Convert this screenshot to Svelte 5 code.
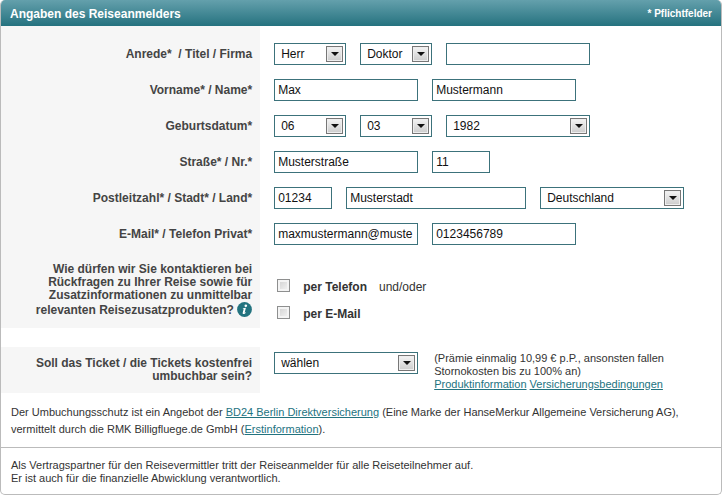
<script lang="ts">
  let anrede = $state('Herr');
  let titel = $state('Doktor');
  let firma = $state('');
  let vorname = $state('Max');
  let nachname = $state('Mustermann');
  let tag = $state('06');
  let monat = $state('03');
  let jahr = $state('1982');
  let strasse = $state('Musterstraße');
  let hausnummer = $state('11');
  let plz = $state('01234');
  let stadt = $state('Musterstadt');
  let land = $state('Deutschland');
  let email = $state('maxmustermann@muste');
  let telefon = $state('0123456789');
  let perTelefon = $state(false);
  let perMail = $state(false);
  let umbuchbar = $state('wählen');

  const range = (from: number, to: number) =>
    Array.from({ length: to - from + 1 }, (_, i) => String(from + i).padStart(2, '0'));

  const tage = range(1, 31);
  const monate = range(1, 12);
  const jahre = range(1920, 2012).reverse();
</script>

{#snippet arrow()}
  <span class="arrow" aria-hidden="true">
    <svg width="8" height="4" viewBox="0 0 8 4"><path d="M0 0h8L4 4z" fill="#111" /></svg>
  </span>
{/snippet}

<form class="box" onsubmit={(e) => e.preventDefault()}>
  <header>
    <h2>Angaben des Reiseanmelders</h2>
    <span class="required">* Pflichtfelder</span>
  </header>

  <div class="rows">
    <div class="row">
      <div class="label">
        <label for="anrede">Anrede*</label>&nbsp; / <label for="titel">Titel</label> /
        <label for="firma">Firma</label>
      </div>
      <div class="fields">
        <span class="select s">
          <select id="anrede" bind:value={anrede}>
            <option>Herr</option>
            <option>Frau</option>
          </select>
          {@render arrow()}
        </span>
        <span class="select s">
          <select id="titel" bind:value={titel}>
            <option>Doktor</option>
            <option>Prof.</option>
          </select>
          {@render arrow()}
        </span>
        <input class="m" id="firma" type="text" bind:value={firma} />
      </div>
    </div>

    <div class="row">
      <div class="label">
        <label for="vorname">Vorname*</label> / <label for="nachname">Name*</label>
      </div>
      <div class="fields">
        <input class="m" id="vorname" type="text" bind:value={vorname} />
        <input class="m" id="nachname" type="text" bind:value={nachname} />
      </div>
    </div>

    <div class="row">
      <div class="label"><label for="tag">Geburtsdatum*</label></div>
      <div class="fields">
        <span class="select s">
          <select id="tag" bind:value={tag}>
            {#each tage as t}<option>{t}</option>{/each}
          </select>
          {@render arrow()}
        </span>
        <span class="select s">
          <select id="monat" aria-label="Monat" bind:value={monat}>
            {#each monate as m}<option>{m}</option>{/each}
          </select>
          {@render arrow()}
        </span>
        <span class="select m">
          <select id="jahr" aria-label="Jahr" bind:value={jahr}>
            {#each jahre as j}<option>{j}</option>{/each}
          </select>
          {@render arrow()}
        </span>
      </div>
    </div>

    <div class="row">
      <div class="label">
        <label for="strasse">Straße*</label> / <label for="hausnummer">Nr.*</label>
      </div>
      <div class="fields">
        <input class="m" id="strasse" type="text" bind:value={strasse} />
        <input class="xs" id="hausnummer" type="text" bind:value={hausnummer} />
      </div>
    </div>

    <div class="row">
      <div class="label">
        <label for="plz">Postleitzahl*</label> / <label for="stadt">Stadt*</label> /
        <label for="land">Land*</label>
      </div>
      <div class="fields">
        <input class="xs" id="plz" type="text" bind:value={plz} />
        <input class="l" id="stadt" type="text" bind:value={stadt} />
        <span class="select m">
          <select id="land" bind:value={land}>
            <option>Deutschland</option>
            <option>Österreich</option>
            <option>Schweiz</option>
          </select>
          {@render arrow()}
        </span>
      </div>
    </div>

    <div class="row">
      <div class="label">
        <label for="email">E-Mail*</label> / <label for="telefon">Telefon Privat*</label>
      </div>
      <div class="fields">
        <input class="m" id="email" type="text" bind:value={email} />
        <input class="m" id="telefon" type="text" bind:value={telefon} />
      </div>
    </div>

    <div class="row contact" role="group" aria-labelledby="kontakt">
      <div class="label" id="kontakt">
        Wie dürfen wir Sie kontaktieren bei<br />
        Rückfragen zu Ihrer Reise sowie für<br />
        Zusatzinformationen zu unmittelbar<br />
        relevanten Reisezusatzprodukten?
        <svg class="info" width="15" height="15" viewBox="0 0 15 15" aria-hidden="true">
          <circle cx="7.5" cy="7.5" r="7.4" fill="#23737f" />
          <circle cx="8.8" cy="3.7" r="1.3" fill="#fff" />
          <path
            d="M5.9 6.2 8.9 5.8 7.7 10.4c-.1.5.2.5.9-.1l.3.4c-1.4 1.8-3.6 1.9-3.2.1l.9-3.6c.1-.4-.1-.5-.8-.5z"
            fill="#fff"
          />
        </svg>
      </div>
      <div class="checks">
        <div class="check">
          <input id="per-telefon" type="checkbox" bind:checked={perTelefon} />
          <label for="per-telefon">per Telefon</label>
          <span>und/oder</span>
        </div>
        <div class="check">
          <input id="per-mail" type="checkbox" bind:checked={perMail} />
          <label for="per-mail">per E-Mail</label>
        </div>
      </div>
    </div>
  </div>

  <div class="row ticket">
    <div class="label">
      <label for="umbuchbar">Soll das Ticket / die Tickets kostenfrei<br />umbuchbar sein?</label>
    </div>
    <div class="fields">
      <span class="select m">
        <select id="umbuchbar" bind:value={umbuchbar}>
          <option>wählen</option>
          <option>ja</option>
          <option>nein</option>
        </select>
        {@render arrow()}
      </span>
      <p class="premium">
        (Prämie einmalig 10,99 € p.P., ansonsten fallen<br />
        Stornokosten bis zu 100% an)<br />
        <a href="#produktinformation">Produktinformation</a>
        <a href="#versicherungsbedingungen">Versicherungsbedingungen</a>
      </p>
    </div>
  </div>

  <p class="offer">
    Der Umbuchungsschutz ist ein Angebot der <a href="#bd24">BD24 Berlin Direktversicherung</a> (Eine
    Marke der HanseMerkur Allgemeine Versicherung AG),<br />
    vermittelt durch die RMK Billigfluege.de GmbH (<a href="#erstinformation">Erstinformation</a>).
  </p>

  <p class="partner">
    Als Vertragspartner für den Reisevermittler tritt der Reiseanmelder für alle Reiseteilnehmer
    auf.<br />
    Er ist auch für die finanzielle Abwicklung verantwortlich.
  </p>
</form>

<style>
  .box {
    box-sizing: border-box;
    border: 1px solid #bbb;
    border-top: 0;
    border-radius: 5px;
    overflow: hidden;
    background: #fff;
    color: #333;
    font: 11px/13px 'Liberation Sans', Arial, sans-serif;
  }
  header {
    display: flex;
    align-items: center;
    justify-content: space-between;
    height: 26px;
    margin: 0 -1px;
    padding: 0 10px;
    background: linear-gradient(#64a0ac, #25727f);
    color: #fff;
  }
  h2 {
    margin: 0;
    padding-top: 2px;
    font-size: 12px;
    line-height: 14px;
  }
  .required {
    font-size: 10px;
    font-weight: bold;
  }
  .rows {
    padding-top: 10px;
    background: linear-gradient(#f6f6f6, #f6f6f6) 0 0 / 36% 100% no-repeat;
  }
  .row {
    display: grid;
    grid-template-columns: 36% 1fr;
    align-items: center;
    min-height: 36px;
  }
  .label {
    padding-right: 8px;
    color: #444;
    font-size: 12px;
    font-weight: bold;
    line-height: 13px;
    text-align: right;
  }
  .fields {
    display: flex;
    align-items: center;
    gap: 14px;
    padding-left: 14px;
  }
  input[type='text'],
  select {
    box-sizing: border-box;
    height: 22px;
    margin: 0;
    padding: 0 0 0 3px;
    border: 1px solid #3c727b;
    border-radius: 0;
    background: #fff;
    color: #111;
    font: 12px 'Liberation Sans', Arial, sans-serif;
  }
  select {
    width: 100%;
    padding: 0 22px 0 6px;
    appearance: none;
  }
  .select {
    position: relative;
    display: block;
  }
  .arrow {
    position: absolute;
    top: 3px;
    right: 3px;
    box-sizing: border-box;
    display: flex;
    align-items: center;
    justify-content: center;
    width: 17px;
    height: 16px;
    border: 1px solid #777;
    background: linear-gradient(#f4f4f4, #ccc);
    box-shadow: inset 0 0 0 1px #eee;
    pointer-events: none;
  }
  .xs {
    width: 58px;
  }
  .s {
    width: 72px;
  }
  .m {
    width: 144px;
  }
  .l {
    width: 180px;
  }
  .contact {
    align-items: start;
    min-height: 76px;
  }
  .contact .label {
    padding-top: 11px;
  }
  .info {
    vertical-align: -3px;
  }
  .checks {
    padding: 22px 0 0 17px;
  }
  .check {
    display: flex;
    align-items: flex-start;
    height: 27px;
    font-size: 12px;
    line-height: 27px;
  }
  .check input {
    box-sizing: border-box;
    width: 13px;
    height: 13px;
    margin: 5px 13px 0 0;
    border: 1px solid #8e8f8f;
    border-radius: 0;
    background: linear-gradient(135deg, #cfcfcf, #f6f6f6);
    box-shadow: inset 0 0 0 2px #f4f4f4;
    appearance: none;
  }
  .check input:checked {
    background: #23737f;
  }
  .check label {
    font-weight: bold;
  }
  .check span {
    margin-left: 12px;
  }
  .ticket {
    min-height: 46px;
    margin-top: 19px;
    background: linear-gradient(#f6f6f6, #f6f6f6) 0 0 / 36% 100% no-repeat;
  }
  .ticket .fields {
    align-self: start;
    align-items: flex-start;
    gap: 16px;
    padding-top: 5px;
  }
  p {
    margin: 0;
  }
  a {
    color: #23737f;
    text-decoration: underline;
  }
  .offer {
    padding: 11px 10px 9px;
    line-height: 17px;
  }
  .partner {
    padding: 11px 10px 9px;
    border-top: 1px solid #bbb;
  }
</style>
